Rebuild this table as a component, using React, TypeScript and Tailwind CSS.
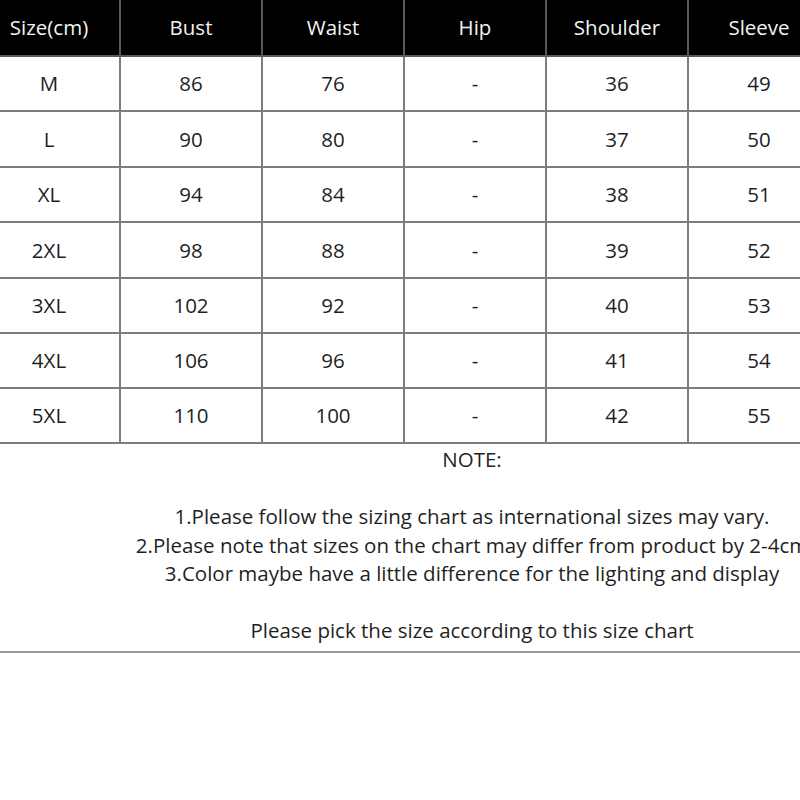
const headers = ["Size(cm)", "Bust", "Waist", "Hip", "Shoulder", "Sleeve", ""];

const rows = [
  ["M", "86", "76", "-", "36", "49", ""],
  ["L", "90", "80", "-", "37", "50", ""],
  ["XL", "94", "84", "-", "38", "51", ""],
  ["2XL", "98", "88", "-", "39", "52", ""],
  ["3XL", "102", "92", "-", "40", "53", ""],
  ["4XL", "106", "96", "-", "41", "54", ""],
  ["5XL", "110", "100", "-", "42", "55", ""],
];

const rowHeights = ["h-[55px]", "h-[56px]", "h-[55px]", "h-[56px]", "h-[55px]", "h-[55px]", "h-[55px]"];

export default function App() {
  return (
    <div
      className="w-[800px] h-[800px] overflow-hidden bg-white text-[#1f1f1f]"
      style={{ fontFamily: '"Open Sans", "Noto Sans", sans-serif' }}
    >
      {/* size table, wider than the frame and cropped on both sides */}
      <div className="ml-[-21px] w-[994px]">
        <div className="grid grid-cols-7 h-[57px] bg-black text-[#f2f2f2]">
          {headers.map((h, j) => (
            <div key={j} className="flex items-center justify-center border-r-2 border-b-2 border-[#5a5a5a] text-[20.5px]">
              {h}
            </div>
          ))}
        </div>
        {rows.map((r, i) => (
          <div key={r[0]} className={`grid grid-cols-7 ${rowHeights[i]}`}>
            {r.map((c, j) => (
              <div key={j} className="flex items-center justify-center border-r-2 border-b-2 border-[#7d7d7d] text-[20.5px]">
                {c}
              </div>
            ))}
          </div>
        ))}
      </div>

      {/* notes */}
      <div className="border-b-2 border-[#9a9a9a] pt-px pb-[6px]">
        <div className="w-[944px] text-center text-[20.5px] leading-[28.5px]">
          <p>NOTE:</p>
          <p>&nbsp;</p>
          <p>1.Please follow the sizing chart as international sizes may vary.</p>
          <p>2.Please note that sizes on the chart may differ from product by 2-4cm</p>
          <p>3.Color maybe have a little difference for the lighting and display</p>
          <p>&nbsp;</p>
          <p>Please pick the size according to this size chart</p>
        </div>
      </div>
    </div>
  );
}
